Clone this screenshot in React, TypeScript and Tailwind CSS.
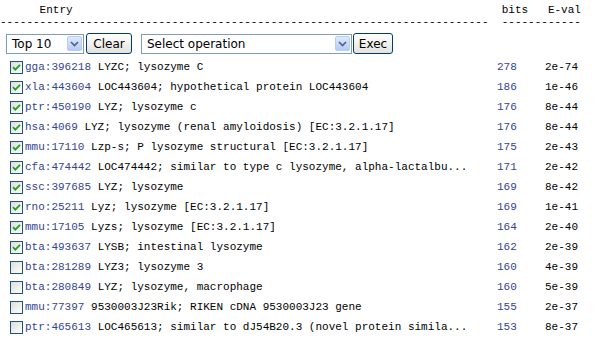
import React from "react";

interface Hit {
  id: string;
  def: string;
  bits: string;
  ev: string;
  checked: boolean;
}

const hits: Hit[] = [
  { id: "gga:396218", def: "LYZC; lysozyme C", bits: "278", ev: "2e-74", checked: true },
  { id: "xla:443604", def: "LOC443604; hypothetical protein LOC443604", bits: "186", ev: "1e-46", checked: true },
  { id: "ptr:450190", def: "LYZ; lysozyme c", bits: "176", ev: "8e-44", checked: true },
  { id: "hsa:4069", def: "LYZ; lysozyme (renal amyloidosis) [EC:3.2.1.17]", bits: "176", ev: "8e-44", checked: true },
  { id: "mmu:17110", def: "Lzp-s; P lysozyme structural [EC:3.2.1.17]", bits: "175", ev: "2e-43", checked: true },
  { id: "cfa:474442", def: "LOC474442; similar to type c lysozyme, alpha-lactalbu...", bits: "171", ev: "2e-42", checked: true },
  { id: "ssc:397685", def: "LYZ; lysozyme", bits: "169", ev: "8e-42", checked: true },
  { id: "rno:25211", def: "Lyz; lysozyme [EC:3.2.1.17]", bits: "169", ev: "1e-41", checked: true },
  { id: "mmu:17105", def: "Lyzs; lysozyme [EC:3.2.1.17]", bits: "164", ev: "2e-40", checked: true },
  { id: "bta:493637", def: "LYSB; intestinal lysozyme", bits: "162", ev: "2e-39", checked: true },
  { id: "bta:281289", def: "LYZ3; lysozyme 3", bits: "160", ev: "4e-39", checked: false },
  { id: "bta:280849", def: "LYZ; lysozyme, macrophage", bits: "160", ev: "5e-39", checked: false },
  { id: "mmu:77397", def: "9530003J23Rik; RIKEN cDNA 9530003J23 gene", bits: "155", ev: "2e-37", checked: false },
  { id: "ptr:465613", def: "LOC465613; similar to dJ54B20.3 (novel protein simila...", bits: "153", ev: "8e-37", checked: false },
  { id: "", def: "", bits: "", ev: "", checked: false },
];

const mono = "font-[family-name:Liberation_Mono,Courier_New,monospace] text-[11px]";
const ui = "font-[family-name:DejaVu_Sans,Liberation_Sans,sans-serif] text-[12px]";

// column header, laid out like the original <pre> block
const headLine = " ".repeat(6) + "Entry" + " ".repeat(65) + "bits   E-val";
const dashLine = "-".repeat(74) + "  " + "-".repeat(12);

function Box({ checked }: { checked: boolean }) {
  return (
    <span className="relative inline-block h-[13px] w-[13px] shrink-0 border border-[#1c5180] bg-gradient-to-br from-[#dcdcd7] to-white">
      {checked && (
        <svg viewBox="0 0 11 11" className="absolute inset-0 h-[11px] w-[11px]">
          <path d="M2 5.2 L4.3 7.6 L9 2.8" fill="none" stroke="#21a121" strokeWidth="1.8" />
        </svg>
      )}
    </span>
  );
}

function Arrow() {
  return (
    <span className="flex h-[15px] w-[15px] items-center justify-center rounded-[2px] border border-[#b9cdf6] bg-gradient-to-b from-[#dfe8fd] to-[#b6cbf7]">
      <svg viewBox="0 0 9 6" className="h-[6px] w-[9px]">
        <path d="M1 1 L4.5 4.5 L8 1" fill="none" stroke="#4d6185" strokeWidth="1.6" />
      </svg>
    </span>
  );
}

function Select({ label, w }: { label: string; w: string }) {
  return (
    <div className={`flex h-[20px] ${w} items-center justify-between border border-[#7f9db9] bg-white pl-[5px] pr-[1px]`}>
      <span className="text-black">{label}</span>
      <Arrow />
    </div>
  );
}

function Btn({ label, w }: { label: string; w: string }) {
  return (
    <div className={`flex h-[21px] ${w} items-center justify-center rounded-[3px] border border-[#003c74] bg-gradient-to-b from-white to-[#e3e3db] text-black`}>
      {label}
    </div>
  );
}

export default function App() {
  return (
    <div className="h-[341px] w-[615px] overflow-hidden bg-white text-black">
      <pre className={`${mono} m-0 pt-[4px] leading-[12px]`}>
        {headLine + "\n" + dashLine}
      </pre>

      <div className={`${ui} mt-[5px] ml-[6px] flex items-center`}>
        <Select label="Top 10" w="w-[78px]" />
        <div className="ml-[2px]">
          <Btn label="Clear" w="w-[46px]" />
        </div>
        <div className="ml-[9px]">
          <Select label="Select operation" w="w-[211px]" />
        </div>
        <div className="ml-[1px]">
          <Btn label="Exec" w="w-[40px]" />
        </div>
      </div>

      <div className={`${mono} mt-[3px]`}>
        {hits.map((h, i) => (
          <div key={i} className="flex h-[20px] items-center whitespace-pre">
            <span className="ml-[10px] mr-[2px] flex">
              <Box checked={h.checked} />
            </span>
            <span className="w-[472px]">
              {h.def && (
                <>
                  <span className="text-[#34448f]">{h.id}</span> {h.def}
                </>
              )}
            </span>
            <span className="w-[48px] text-[#34448f]">{h.bits}</span>
            <span>{h.ev}</span>
          </div>
        ))}
      </div>
    </div>
  );
}
